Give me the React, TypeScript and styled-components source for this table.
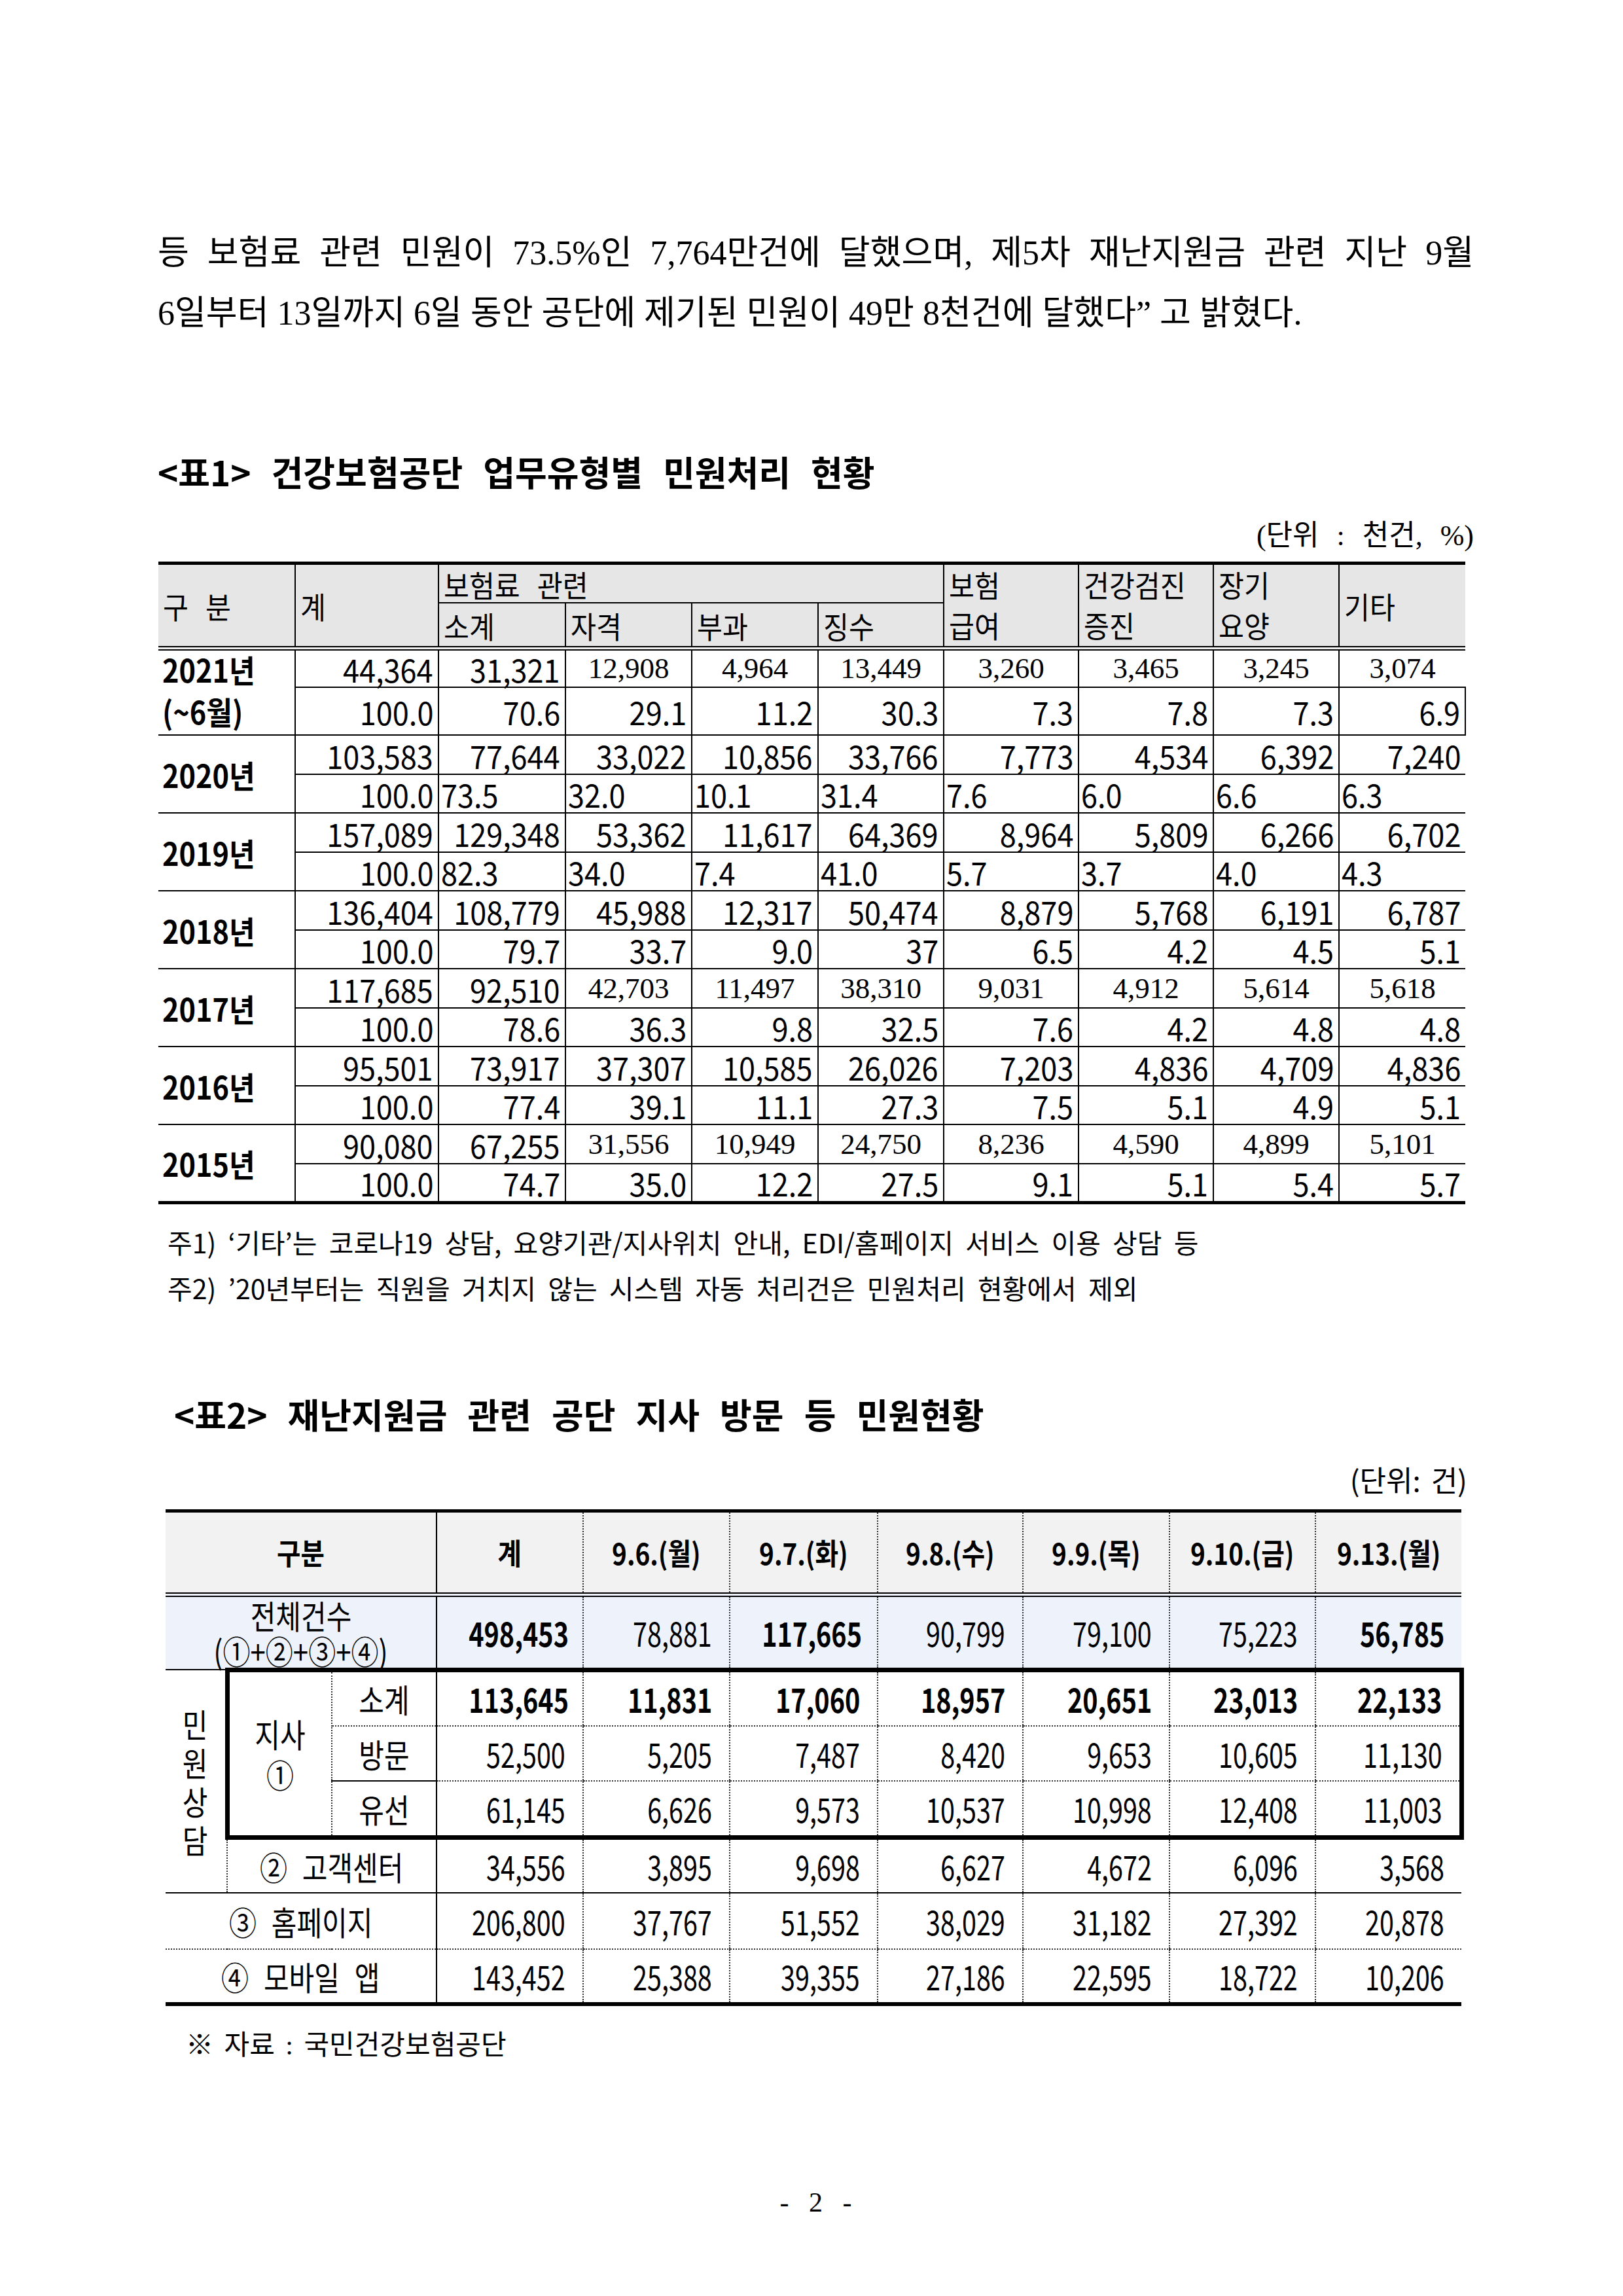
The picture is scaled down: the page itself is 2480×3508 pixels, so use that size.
import React from "react";
import styled, { createGlobalStyle, css } from "styled-components";

const SANS = `"Noto Sans CJK KR", "Noto Sans", sans-serif`;
const SERIF = `"Liberation Serif", "Noto Sans CJK KR", serif`;

const LINE = "2px solid #000";
const DOT = "2px dotted #333";
const THICK = "7px solid #000";
const DOUBLE = "7px double #000";

const GlobalStyle = createGlobalStyle`
  html, body { margin: 0; padding: 0; background: #fff; }
  * { box-sizing: border-box; }
`;

interface EdgeProps {
  $l?: string;
  $t?: string;
  $r?: string;
  $b?: string;
}

const edges = css<EdgeProps>`
  border-left: ${(p) => p.$l ?? "none"};
  border-top: ${(p) => p.$t ?? "none"};
  border-right: ${(p) => p.$r ?? "none"};
  border-bottom: ${(p) => p.$b ?? "none"};
`;

/* condensed glyphs, like the 장평 setting of the source document */
const Squeeze = styled.span<{ $x: number; $origin?: "left" | "right" | "center" }>`
  display: inline-block;
  white-space: nowrap;
  transform: scaleX(${(p) => p.$x});
  transform-origin: ${(p) => p.$origin ?? "center"} center;
`;

const Page = styled.div`
  width: 2480px;
  height: 3508px;
  padding: 341px 228px 0 241px;
  font-family: ${SANS};
  color: #000;
  overflow: hidden;
`;

const Paragraph = styled.div`
  font-family: ${SERIF};
  font-size: 52px;
  line-height: 92px;
`;

const TextLine = styled.div<{ $justify?: boolean }>`
  text-align: ${(p) => (p.$justify ? "justify" : "left")};
  text-align-last: ${(p) => (p.$justify ? "justify" : "left")};
`;

const Title = styled.h2<{ $top: number; $indent?: number }>`
  margin: ${(p) => p.$top}px 0 0 ${(p) => p.$indent ?? 0}px;
  font-family: ${SANS};
  font-size: 53px;
  font-weight: 700;
  line-height: 70px;
  word-spacing: 19px;
`;

const Unit = styled.div<{ $top: number; $serif?: boolean; $inset?: number }>`
  margin: ${(p) => p.$top}px ${(p) => p.$inset ?? 0}px 0 0;
  text-align: right;
  font-family: ${(p) => (p.$serif ? SERIF : SANS)};
  font-size: 44px;
  line-height: 56px;
  word-spacing: ${(p) => (p.$serif ? 16 : 6)}px;
`;

/* ---------- table 1 ---------- */

const Table1 = styled.table`
  margin: 11px 0 0 1px;
  width: 1997px;
  table-layout: fixed;
  border-collapse: collapse;
  border-top: 5px solid #000;
  border-bottom: 5px solid #000;
  font-family: ${SANS};
`;

const Row = styled.tr<{ $h: number }>`
  height: ${(p) => p.$h}px;
`;

const HeadCell = styled.th<EdgeProps>`
  ${edges};
  background: #e6e6e6;
  font-weight: 400;
  font-size: 46px;
  line-height: 1;
  text-align: left;
  vertical-align: middle;
  padding: 0 7px;
  word-spacing: 18px;
  white-space: nowrap;
`;

const Stack = styled.div`
  display: flex;
  flex-direction: column;
`;

const StackLine = styled.span<{ $h: number }>`
  display: block;
  height: ${(p) => p.$h}px;
  line-height: ${(p) => p.$h}px;
`;

const YearCell = styled.th<EdgeProps>`
  ${edges};
  font-weight: 700;
  font-size: 48px;
  line-height: 1;
  text-align: left;
  padding: 0 6px;
  white-space: nowrap;
`;

const NumCell = styled.td<EdgeProps & { $align?: "left" | "right" | "center"; $serif?: boolean }>`
  ${edges};
  font-family: ${(p) => (p.$serif ? SERIF : SANS)};
  font-size: ${(p) => (p.$serif ? 45 : 49)}px;
  line-height: 1;
  text-align: ${(p) => p.$align ?? "right"};
  padding: ${(p) => (p.$align === "left" ? "0 0 0 3px" : p.$align === "center" ? "0" : "0 7px 0 0")};
  white-space: nowrap;
`;

const Head = ({ text }: { text: string }) => (
  <Squeeze $x={0.92} $origin="left">
    {text}
  </Squeeze>
);

const HeadPair = ({ top, bottom }: { top: string; bottom: string }) => (
  <Stack>
    <StackLine $h={58}>
      <Head text={top} />
    </StackLine>
    <StackLine $h={66}>
      <Head text={bottom} />
    </StackLine>
  </Stack>
);

type YearRow = {
  year: string;
  sub?: string;
  counts: string[];
  rates: string[];
  serifFrom?: number;
  ratesLeft?: boolean;
};

const years: YearRow[] = [
  {
    year: "2021년",
    sub: "(~6월)",
    counts: ["44,364", "31,321", "12,908", "4,964", "13,449", "3,260", "3,465", "3,245", "3,074"],
    rates: ["100.0", "70.6", "29.1", "11.2", "30.3", "7.3", "7.8", "7.3", "6.9"],
    serifFrom: 2,
  },
  {
    year: "2020년",
    counts: ["103,583", "77,644", "33,022", "10,856", "33,766", "7,773", "4,534", "6,392", "7,240"],
    rates: ["100.0", "73.5", "32.0", "10.1", "31.4", "7.6", "6.0", "6.6", "6.3"],
    ratesLeft: true,
  },
  {
    year: "2019년",
    counts: ["157,089", "129,348", "53,362", "11,617", "64,369", "8,964", "5,809", "6,266", "6,702"],
    rates: ["100.0", "82.3", "34.0", "7.4", "41.0", "5.7", "3.7", "4.0", "4.3"],
    ratesLeft: true,
  },
  {
    year: "2018년",
    counts: ["136,404", "108,779", "45,988", "12,317", "50,474", "8,879", "5,768", "6,191", "6,787"],
    rates: ["100.0", "79.7", "33.7", "9.0", "37", "6.5", "4.2", "4.5", "5.1"],
  },
  {
    year: "2017년",
    counts: ["117,685", "92,510", "42,703", "11,497", "38,310", "9,031", "4,912", "5,614", "5,618"],
    rates: ["100.0", "78.6", "36.3", "9.8", "32.5", "7.6", "4.2", "4.8", "4.8"],
    serifFrom: 2,
  },
  {
    year: "2016년",
    counts: ["95,501", "73,917", "37,307", "10,585", "26,026", "7,203", "4,836", "4,709", "4,836"],
    rates: ["100.0", "77.4", "39.1", "11.1", "27.3", "7.5", "5.1", "4.9", "5.1"],
  },
  {
    year: "2015년",
    counts: ["90,080", "67,255", "31,556", "10,949", "24,750", "8,236", "4,590", "4,899", "5,101"],
    rates: ["100.0", "74.7", "35.0", "12.2", "27.5", "9.1", "5.1", "5.4", "5.7"],
    serifFrom: 2,
  },
];

const t1Cols = [209, 219, 194, 193, 193, 192, 206, 206, 192, 193];

const YearBlock = ({ row, first }: { row: YearRow; first: boolean }) => {
  const hA = first ? 57 : 60;
  const hB = first ? 71 : 59;
  const top = first ? DOUBLE : undefined;
  return (
    <>
      <Row $h={hA}>
        <YearCell rowSpan={2} $t={top} $b={LINE}>
          {row.sub ? (
            <Stack>
              <StackLine $h={hA}>
                <Squeeze $x={0.9} $origin="left">{row.year}</Squeeze>
              </StackLine>
              <StackLine $h={hB}>
                <Squeeze $x={0.9} $origin="left">{row.sub}</Squeeze>
              </StackLine>
            </Stack>
          ) : (
            <Squeeze $x={0.9} $origin="left">{row.year}</Squeeze>
          )}
        </YearCell>
        {row.counts.map((v, i) => {
          const serif = row.serifFrom !== undefined && i >= row.serifFrom;
          return (
            <NumCell key={i} $l={LINE} $t={top} $b={LINE} $serif={serif} $align={serif ? "center" : "right"}>
              {serif ? v : <Squeeze $x={0.92} $origin="right">{v}</Squeeze>}
            </NumCell>
          );
        })}
      </Row>
      <Row $h={hB}>
        {row.rates.map((v, i) => {
          const left = row.ratesLeft && i > 0;
          return (
            <NumCell
              key={i}
              $l={LINE}
              $b={LINE}
              $r={first && i === row.rates.length - 1 ? LINE : undefined}
              $align={left ? "left" : "right"}
            >
              <Squeeze $x={0.92} $origin={left ? "left" : "right"}>
                {v}
              </Squeeze>
            </NumCell>
          );
        })}
      </Row>
    </>
  );
};

const Notes = styled.div`
  margin: 22px 0 0 15px;
  font-family: ${SANS};
  font-size: 41px;
  line-height: 70px;
  word-spacing: 9px;
`;

/* ---------- table 2 ---------- */

const Table2 = styled.table`
  margin: 18px 0 0 12px;
  width: 1980px;
  table-layout: fixed;
  border-collapse: collapse;
  border-top: 5px solid #000;
  border-bottom: 6px solid #000;
  font-family: ${SANS};
`;

const T2Head = styled.th<EdgeProps>`
  ${edges};
  background: #f2f2f2;
  font-size: 45px;
  font-weight: 700;
  line-height: 1;
  text-align: center;
  white-space: nowrap;
`;

const T2Label = styled.td<EdgeProps & { $bg?: string }>`
  ${edges};
  background: ${(p) => p.$bg ?? "transparent"};
  font-size: 50px;
  line-height: 1;
  text-align: center;
  white-space: nowrap;
  word-spacing: 16px;
  padding: 0;
`;

const T2NumCell = styled.td<EdgeProps & { $bold?: boolean; $bg?: string }>`
  ${edges};
  background: ${(p) => p.$bg ?? "transparent"};
  font-size: 52px;
  font-weight: ${(p) => (p.$bold ? 700 : 400)};
  line-height: 1;
  text-align: right;
  padding: 0 26px 0 0;
  white-space: nowrap;
`;

const LabelLines = styled.div<{ $lh: number }>`
  display: flex;
  flex-direction: column;
  align-items: center;
  line-height: ${(p) => p.$lh}px;
`;

const Label = ({ text }: { text: string }) => <Squeeze $x={0.84}>{text}</Squeeze>;

const t2Cols = [94, 160, 160, 224, 224, 226, 222, 224, 223, 223];
const days = ["9.6.(월)", "9.7.(화)", "9.8.(수)", "9.9.(목)", "9.10.(금)", "9.13.(월)"];

const total = ["498,453", "78,881", "117,665", "90,799", "79,100", "75,223", "56,785"];
const totalBold = [true, false, true, false, false, false, true];
const subtotal = ["113,645", "11,831", "17,060", "18,957", "20,651", "23,013", "22,133"];
const visit = ["52,500", "5,205", "7,487", "8,420", "9,653", "10,605", "11,130"];
const phone = ["61,145", "6,626", "9,573", "10,537", "10,998", "12,408", "11,003"];
const center = ["34,556", "3,895", "9,698", "6,627", "4,672", "6,096", "3,568"];
const homepage = ["206,800", "37,767", "51,552", "38,029", "31,182", "27,392", "20,878"];
const mobile = ["143,452", "25,388", "39,355", "27,186", "22,595", "18,722", "10,206"];

const nums = (
  values: string[],
  opts: { t?: string; b?: string; box?: boolean; bold?: boolean[] | boolean; bg?: string }
) =>
  values.map((v, i) => (
    <T2NumCell
      key={i}
      $l={i === 0 ? LINE : DOT}
      $t={opts.t}
      $b={opts.b}
      $r={opts.box && i === values.length - 1 ? THICK : undefined}
      $bold={Array.isArray(opts.bold) ? opts.bold[i] : opts.bold}
      $bg={opts.bg}
    >
      <Squeeze $x={0.76} $origin="right">
        {v}
      </Squeeze>
    </T2NumCell>
  ));

const Source = styled.div`
  margin: 30px 0 0 43px;
  font-family: ${SERIF};
  font-size: 42px;
  line-height: 60px;
  word-spacing: 6px;
`;

const PageNumber = styled.div`
  margin-top: 180px;
  text-align: center;
  font-family: ${SERIF};
  font-size: 42px;
  line-height: 60px;
  word-spacing: 20px;
`;

export default function App() {
  return (
    <>
      <GlobalStyle />
      <Page>
        <Paragraph>
          <TextLine $justify>
            등 보험료 관련 민원이 73.5%인 7,764만건에 달했으며, 제5차 재난지원금 관련 지난 9월
          </TextLine>
          <TextLine>6일부터 13일까지 6일 동안 공단에 제기된 민원이 49만 8천건에 달했다” 고 밝혔다.</TextLine>
        </Paragraph>

        <Title $top={160}>&lt;표1&gt; 건강보험공단 업무유형별 민원처리 현황</Title>
        <Unit $top={36} $serif>
          (단위 : 천건, %)
        </Unit>

        <Table1>
          <colgroup>
            {t1Cols.map((w, i) => (
              <col key={i} style={{ width: w }} />
            ))}
          </colgroup>
          <thead>
            <Row $h={58}>
              <HeadCell rowSpan={2}>
                <Head text="구 분" />
              </HeadCell>
              <HeadCell rowSpan={2} $l={LINE}>
                <Head text="계" />
              </HeadCell>
              <HeadCell colSpan={4} $l={LINE} $b={LINE}>
                <Head text="보험료 관련" />
              </HeadCell>
              <HeadCell rowSpan={2} $l={LINE}>
                <HeadPair top="보험" bottom="급여" />
              </HeadCell>
              <HeadCell rowSpan={2} $l={LINE}>
                <HeadPair top="건강검진" bottom="증진" />
              </HeadCell>
              <HeadCell rowSpan={2} $l={LINE}>
                <HeadPair top="장기" bottom="요양" />
              </HeadCell>
              <HeadCell rowSpan={2} $l={LINE}>
                <Head text="기타" />
              </HeadCell>
            </Row>
            <Row $h={66}>
              <HeadCell $l={LINE}>
                <Head text="소계" />
              </HeadCell>
              <HeadCell $l={LINE}>
                <Head text="자격" />
              </HeadCell>
              <HeadCell $l={LINE}>
                <Head text="부과" />
              </HeadCell>
              <HeadCell $l={LINE}>
                <Head text="징수" />
              </HeadCell>
            </Row>
          </thead>
          <tbody>
            {years.map((row, i) => (
              <YearBlock key={row.year} row={row} first={i === 0} />
            ))}
          </tbody>
        </Table1>

        <Notes>
          <div>주1) ‘기타’는 코로나19 상담, 요양기관/지사위치 안내, EDI/홈페이지 서비스 이용 상담 등</div>
          <div>주2) ’20년부터는 직원을 거치지 않는 시스템 자동 처리건은 민원처리 현황에서 제외</div>
        </Notes>

        <Title $top={123} $indent={25}>
          &lt;표2&gt; 재난지원금 관련 공단 지사 방문 등 민원현황
        </Title>
        <Unit $top={37} $inset={10}>
          (단위: 건)
        </Unit>

        <Table2>
          <colgroup>
            {t2Cols.map((w, i) => (
              <col key={i} style={{ width: w }} />
            ))}
          </colgroup>
          <thead>
            <Row $h={128}>
              <T2Head colSpan={3} $b={DOUBLE}>
                <Squeeze $x={0.88}>구분</Squeeze>
              </T2Head>
              <T2Head $l={LINE} $b={DOUBLE}>
                <Squeeze $x={0.88}>계</Squeeze>
              </T2Head>
              {days.map((d) => (
                <T2Head key={d} $l={DOT} $b={DOUBLE}>
                  <Squeeze $x={0.86}>{d}</Squeeze>
                </T2Head>
              ))}
            </Row>
          </thead>
          <tbody>
            <Row $h={110}>
              <T2Label colSpan={3} $bg="#eef3fb" $b={LINE}>
                <LabelLines $lh={54}>
                  <Label text="전체건수" />
                  <Label text="(①+②+③+④)" />
                </LabelLines>
              </T2Label>
              {nums(total, { bold: totalBold, bg: "#eef3fb" })}
            </Row>
            <Row $h={86}>
              <T2Label rowSpan={4} $t={LINE} $b={LINE}>
                <LabelLines $lh={59}>
                  {"민원상담".split("").map((c) => (
                    <Label key={c} text={c} />
                  ))}
                </LabelLines>
              </T2Label>
              <T2Label rowSpan={3} $l={THICK} $t={THICK} $b={THICK} $r={DOT}>
                <LabelLines $lh={62}>
                  <Label text="지사" />
                  <Label text="①" />
                </LabelLines>
              </T2Label>
              <T2Label $t={THICK} $b={DOT}>
                <Label text="소계" />
              </T2Label>
              {nums(subtotal, { t: THICK, b: DOT, box: true, bold: true })}
            </Row>
            <Row $h={84}>
              <T2Label $b={LINE}>
                <Label text="방문" />
              </T2Label>
              {nums(visit, { b: DOT, box: true })}
            </Row>
            <Row $h={86}>
              <T2Label $b={THICK}>
                <Label text="유선" />
              </T2Label>
              {nums(phone, { b: THICK, box: true })}
            </Row>
            <Row $h={85}>
              <T2Label colSpan={2} $l={DOT} $b={LINE}>
                <Label text="② 고객센터" />
              </T2Label>
              {nums(center, { b: LINE })}
            </Row>
            <Row $h={86}>
              <T2Label colSpan={3} $b={DOT}>
                <Label text="③ 홈페이지" />
              </T2Label>
              {nums(homepage, { b: DOT })}
            </Row>
            <Row $h={84}>
              <T2Label colSpan={3}>
                <Label text="④ 모바일 앱" />
              </T2Label>
              {nums(mobile, {})}
            </Row>
          </tbody>
        </Table2>

        <Source>※ 자료 : 국민건강보험공단</Source>
        <PageNumber>- 2 -</PageNumber>
      </Page>
    </>
  );
}
